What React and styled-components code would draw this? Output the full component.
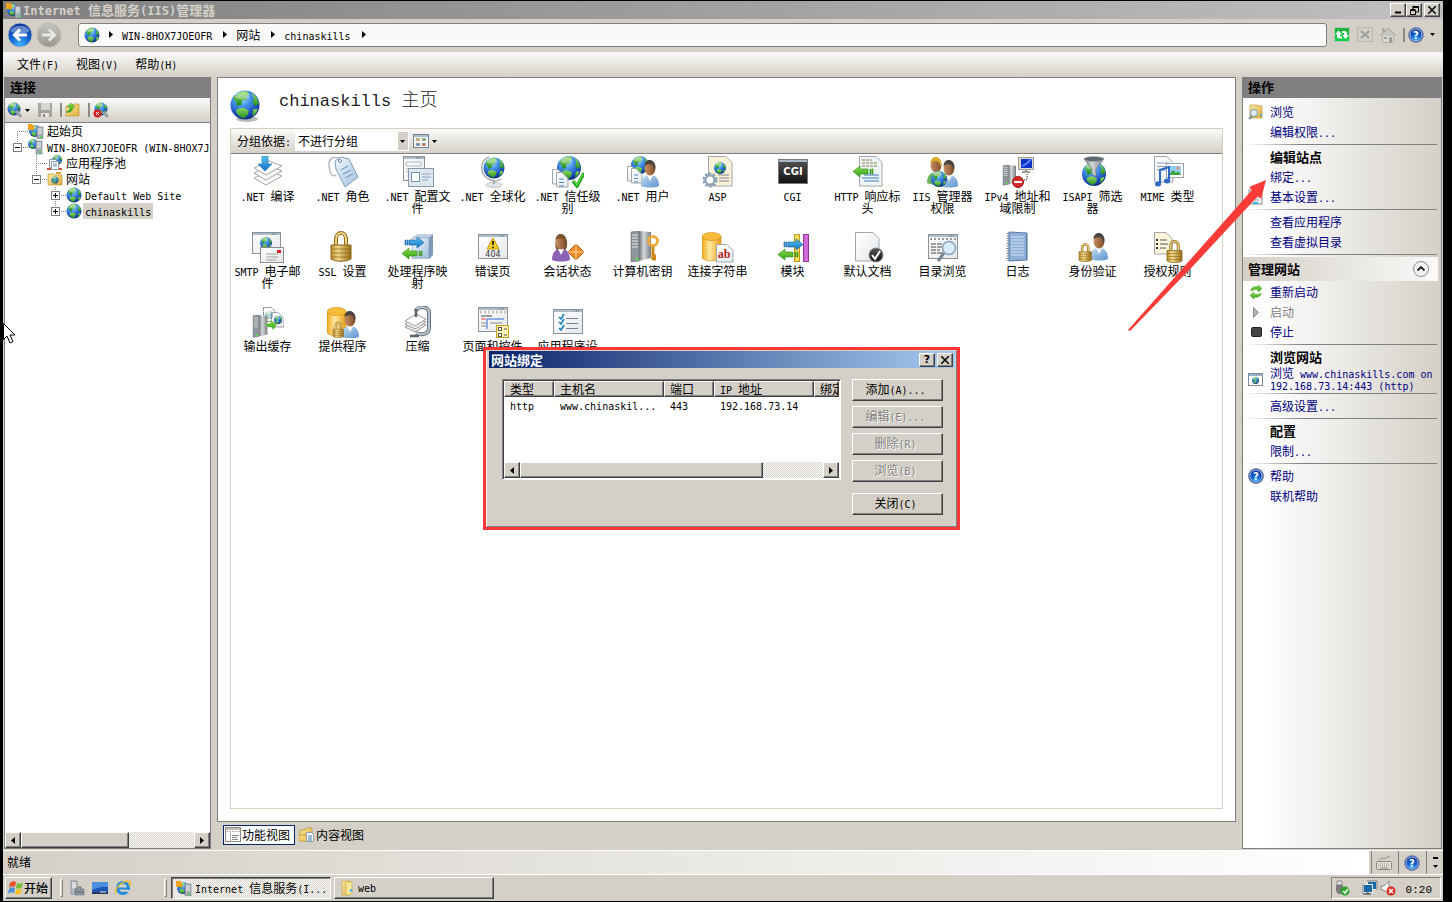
import React from "react";
import styled, { createGlobalStyle, css } from "styled-components";

const Global = createGlobalStyle`
  * { box-sizing: border-box; }
  body {
    margin: 0;
    background: #000;
    color: #000;
    font-family: "Noto Sans CJK SC", sans-serif;
    font-size: 12px;
    line-height: 12px;
  }
  button, select, table { font: inherit; color: inherit; }
  button { padding: 0; border: 0; background: none; white-space: nowrap; }
  ul { list-style: none; margin: 0; padding: 0; }
  svg { display: block; flex: none; }
`;

/* ---------- text ---------- */

const Latin = styled.span`
  font-family: "DejaVu Sans Mono", "Liberation Mono", monospace;
  font-size: var(--latin, 10px);
  line-height: 1px;
`;

const T = ({ children }) =>
  children
    .split(/([\x20-\x7e]+)/)
    .filter(Boolean)
    .map((part, i) => (/^[\x20-\x7e]/.test(part) ? <Latin key={i}>{part}</Latin> : part));

/* ---------- drawing pieces ---------- */

const Defs = () => (
  <svg width="0" height="0" style={{ position: "absolute" }} aria-hidden="true">
    <defs>
      <radialGradient id="sea" cx=".4" cy=".25" r=".8">
        <stop offset="0" stopColor="#a9dcff" />
        <stop offset=".4" stopColor="#3f8fe6" />
        <stop offset=".8" stopColor="#1740b0" />
        <stop offset="1" stopColor="#0c2470" />
      </radialGradient>
      <linearGradient id="land" x2="0" y2="1">
        <stop offset="0" stopColor="#8fdc62" />
        <stop offset="1" stopColor="#1f8a1f" />
      </linearGradient>
      <linearGradient id="gold" x2="1" y2="0">
        <stop offset="0" stopColor="#b98a2c" />
        <stop offset=".35" stopColor="#f2d98a" />
        <stop offset="1" stopColor="#9a6b14" />
      </linearGradient>
      <linearGradient id="drum" x2="1" y2="0">
        <stop offset="0" stopColor="#f0a81c" />
        <stop offset=".4" stopColor="#ffeaa0" />
        <stop offset="1" stopColor="#e39a10" />
      </linearGradient>
      <linearGradient id="steel" x2="1" y2="0">
        <stop offset="0" stopColor="#6d7276" />
        <stop offset=".4" stopColor="#d5d9dc" />
        <stop offset="1" stopColor="#777c80" />
      </linearGradient>
      <linearGradient id="shirt" x2="1" y2="1">
        <stop offset="0" stopColor="#c4def5" />
        <stop offset="1" stopColor="#5c92cc" />
      </linearGradient>
      <linearGradient id="skin" x2="1" y2="0">
        <stop offset="0" stopColor="#c98f63" />
        <stop offset="1" stopColor="#7e4c2a" />
      </linearGradient>
      <linearGradient id="paper" x2="1" y2="1">
        <stop offset="0" stopColor="#fff" />
        <stop offset="1" stopColor="#e4e8ec" />
      </linearGradient>
      <linearGradient id="black" x2="0" y2="1">
        <stop offset="0" stopColor="#555" />
        <stop offset="1" stopColor="#111" />
      </linearGradient>
      <linearGradient id="blueArrow" x2="0" y2="1">
        <stop offset="0" stopColor="#5cc4f5" />
        <stop offset="1" stopColor="#1272c4" />
      </linearGradient>
      <linearGradient id="greenArrow" x2="0" y2="1">
        <stop offset="0" stopColor="#8be04c" />
        <stop offset="1" stopColor="#2f9e16" />
      </linearGradient>
      <linearGradient id="refreshBox" x2="0" y2="1">
        <stop offset="0" stopColor="#1fae3c" />
        <stop offset="1" stopColor="#0bd64a" />
      </linearGradient>
      <linearGradient id="glass" x2="1" y2="1">
        <stop offset="0" stopColor="#f6fafd" />
        <stop offset="1" stopColor="#9dbfdd" />
      </linearGradient>
      <linearGradient id="folder" x2="1" y2="1">
        <stop offset="0" stopColor="#fbe9a4" />
        <stop offset="1" stopColor="#dcae3c" />
      </linearGradient>
      <radialGradient id="orb" cx=".5" cy=".9" r=".9">
        <stop offset="0" stopColor="#38b4ff" />
        <stop offset=".5" stopColor="#1460cc" />
        <stop offset="1" stopColor="#0b2f92" />
      </radialGradient>
      <linearGradient id="grayOrb" x2="0" y2="1">
        <stop offset="0" stopColor="#c6c4be" />
        <stop offset="1" stopColor="#98968f" />
      </linearGradient>
    </defs>
  </svg>
);

const Globe = ({ x = 8, y = 8, r = 7 }) => (
  <g transform={`translate(${x} ${y}) scale(${r / 16})`}>
    <circle r="16" fill="url(#sea)" />
    <path d="M-13-7C-9-14-3-16 2-15L5-12 1-10 3-7-3-5-4 0-9 1-10-4Z" fill="url(#land)" />
    <path d="M7-13C12-11 15-6 15-1L11 1 8-3 10-7Z" fill="url(#land)" />
    <path d="M-8 4L-2 3 4 6 3 11-1 15C-6 14-9 10-10 7Z" fill="url(#land)" />
    <path d="M9 5l5-1c-1 4-3 7-6 9z" fill="url(#land)" />
    <ellipse cx="-3" cy="-10" rx="8" ry="4" fill="#fff" opacity=".35" />
  </g>
);

const Person = ({ x = 0, y = 0, hair = "#4a4440", body = "url(#shirt)" }) => (
  <g transform={`translate(${x} ${y})`}>
    <path d="M0 27c0-7 3-11 9-11s9 4 9 11c-5 2-13 2-18 0z" fill={body} />
    <path d="M6 16l3 6 3-6z" fill="#fff" />
    <ellipse cx="9" cy="9" rx="5.500" ry="7.500" fill="url(#skin)" />
    <path d="M3.500 7C4-1 14-1 14.500 8l-1.500 3c0-4-1-5-3-5.500-2-.5-5 0-6.500 1.500z" fill={hair} />
  </g>
);

const Lock = ({ x = 0, y = 0, s = 1 }) => (
  <g transform={`translate(${x} ${y}) scale(${s})`}>
    <path d="M5 14V8a5 6 0 0 1 10 0v6" fill="none" stroke="#8d6a1c" strokeWidth="4" />
    <path d="M5 14V8a5 6 0 0 1 10 0v6" fill="none" stroke="#ecd184" strokeWidth="2" />
    <path d="M0 14h20v14c-6 3-14 3-20 0z" fill="url(#gold)" stroke="#8a6418" />
    <path d="M1 18h18M1 22h18M1 26h18" stroke="#8a6418" strokeWidth=".7" />
  </g>
);

const Page = ({ x, y, w = 20, h = 26, fill = "url(#paper)", lines = 0, c = "#8fa3b6", from = 7 }) => (
  <g transform={`translate(${x} ${y})`}>
    <path d={`M.5.5H${w - 6}L${w} 6.5V${h}H.5Z`} fill={fill} stroke="#a2a6aa" />
    <path d={`M${w - 6}.5V6.5H${w}`} fill="#fff" stroke="#a2a6aa" />
    {Array.from({ length: lines }, (_, i) => (
      <path key={i} d={`M3 ${from + i * 3.5}H${w - 4}`} stroke={c} />
    ))}
  </g>
);

const Win = ({ x, y, w, h, fill = "url(#paper)" }) => (
  <g transform={`translate(${x} ${y})`}>
    <rect x=".5" y=".5" width={w} height={h} fill={fill} stroke="#8b9299" />
    <path d={`M1 2H${w}`} stroke="#aebdca" strokeWidth="2" />
    <path d={`M${w - 8} 2h6`} stroke="#4d6f93" strokeDasharray="1 1" />
  </g>
);

const Right = ({ x, y }) => (
  <path transform={`translate(${x} ${y})`} d="M0 3h1v5H0zM2 3h1v5H2zM4 3h8V0l7 5.500-7 5.500V8H4z" fill="url(#blueArrow)" stroke="#0e5c9e" strokeWidth=".6" />
);
const Left = ({ x, y }) => (
  <path transform={`translate(${x} ${y})`} d="M20 3h-1v5h1zM18 3h-1v5h1zM15 3H7V0L0 5.500 7 11V8h8z" fill="url(#greenArrow)" stroke="#2b8613" strokeWidth=".6" />
);

const Tower = ({ x, y, s = 1 }) => (
  <g transform={`translate(${x} ${y}) scale(${s})`}>
    <path d="M0 1L8 0V30L0 31Z" fill="#8f969b" stroke="#666c70" strokeWidth=".6" />
    <path d="M8 0L20 1V27L8 30Z" fill="url(#steel)" />
    <path d="M1 4h6M1 7h6M1 10h6M1 13h6M1 16h6" stroke="#e3e7ea" />
    <circle cx="6" cy="28" r="1.500" fill="#57e04a" />
  </g>
);

const Drum = ({ x, y }) => (
  <g transform={`translate(${x} ${y})`}>
    <path d="M0 4V25c0 5 19 5 19 0V4z" fill="url(#drum)" stroke="#d08c0c" strokeWidth=".6" />
    <ellipse cx="9.500" cy="4.500" rx="9.500" ry="4" fill="#f7bd3a" stroke="#d08c0c" strokeWidth=".6" />
  </g>
);

const GlyphText = styled.text`
  font-family: ${(p) => p.$family || '"DejaVu Sans", sans-serif'};
  font-size: ${(p) => p.$size}px;
  font-weight: ${(p) => (p.$plain ? 400 : 700)};
  text-anchor: middle;
  fill: ${(p) => p.$color || "#fff"};
`;

const art = {
  compile: (
    <>
      {[16, 11, 6].map((dy) => (
        <path key={dy} d={`M2 ${dy + 6}L17 ${dy - 1}L30 ${dy + 4}L14 ${dy + 13}Z`} fill="#fbfbfb" stroke="#a5a5a5" />
      ))}
      <path d="M10 0h6v8h4l-7 7-7-7h4z" fill="url(#blueArrow)" stroke="#1670b4" strokeWidth=".6" />
    </>
  ),
  roles: (
    <>
      <path d="M14 3C6-1 1 3 2 10s3 12 7 9" fill="none" stroke="#a9b2ba" strokeWidth="1.300" />
      <path d="M8 5L14 1 22 3 31 21 18 31 9 13Z" fill="url(#glass)" stroke="#7d9bb7" />
      <circle cx="13" cy="5" r="1.500" fill="#fff" stroke="#71889d" />
      <path d="M14 14l7-4M16 18l8-4M18 22l8-4" stroke="#5e8fc0" />
    </>
  ),
  config: (
    <>
      <Win x={1} y={0} w={21} h={24} />
      <path d="M4 6h15v4H4zM4 13h9M4 16h6" fill="none" stroke="#b3b9bf" />
      <rect x="6.500" y="12.500" width="25" height="18" fill="#dfe7ee" stroke="#8b98a5" />
      <rect x="9.500" y="16.500" width="8" height="9" fill="#fff" stroke="#6f93b8" />
      <path d="M20 18h9M20 21h9M20 24h6" stroke="#8aa6c1" />
    </>
  ),
  global: (
    <>
      <path d="M12 1C2 5 2 20 14 24c3 1 7 1 10-1" fill="none" stroke="#a8adb1" strokeWidth="1.500" />
      <Globe x={17} y={12} r={10.5} />
      <ellipse cx="17" cy="29" rx="8" ry="2.500" fill="#e2e4e6" stroke="#a8adb1" strokeWidth=".6" />
      <path d="M17 24v4" stroke="#a8adb1" strokeWidth="2" />
    </>
  ),
  trust: (
    <>
      <Globe x={17} y={12} r={12} />
      <Page x={0} y={13} w={12} h={15} />
      <Page x={4} y={16} w={12} h={15} lines={3} c="#4a86c8" />
      <path d="M21 25l4 5 7-13" fill="none" stroke="#21a321" strokeWidth="3.500" />
      <path d="M22 25l3 4 6-11" fill="none" stroke="#6fe04f" strokeWidth="1.200" />
    </>
  ),
  users: (
    <>
      <Globe x={13} y={9} r={9} />
      <Page x={0} y={10} w={11} h={15} />
      <Page x={4} y={12} w={11} h={15} lines={3} c="#4a86c8" />
      <Person x={14} y={3} />
    </>
  ),
  asp: (
    <>
      <Page x={6} y={0} w={24} h={30} fill="#f8f3d8" />
      <Globe x={18} y={12} r={6} />
      <path d="M16 19h11M17 22h10M17 25h10" stroke="#7f7a9c" />
      <circle cx="8" cy="24" r="6" fill="none" stroke="#8ba2b8" strokeWidth="3" strokeDasharray="2.500 1.270" />
      <circle cx="8" cy="24" r="4.500" fill="#fff" stroke="#8ba2b8" strokeWidth="2" />
    </>
  ),
  cgi: (
    <>
      <rect x="1.500" y="3.500" width="29" height="24" fill="url(#black)" stroke="#777" />
      <path d="M2 5h28" stroke="#a7b7c7" strokeWidth="2" />
      <GlyphText x="16" y="19" $size={10}>CGI</GlyphText>
    </>
  ),
  headers: (
    <>
      <Page x={7} y={0} w={23} h={30} fill="#edf5f6" />
      <path d="M10 4h10M10 7h15M10 10h15" stroke="#8b7a3c" strokeDasharray="3 1" />
      <path d="M12 19h15M10 22h17M12 25h15" stroke="#3c7cc0" />
      <Left x={1} y={10} />
    </>
  ),
  managers: (
    <>
      <Person x={0} y={0} hair="#d9a92e" body="#6fb35c" />
      <Person x={13} y={3} />
      <Globe x={12} y={23} r={8} />
    </>
  ),
  ipv4: (
    <>
      <Tower x={1} y={9} s={0.65} />
      <rect x="16.500" y="1.500" width="15" height="12" fill="#dcdcd6" stroke="#9c9c95" />
      <rect x="19" y="3" width="11" height="9" fill="#1233c8" />
      <path d="M20 10c3-1 6-3 9-7" stroke="#5c8cf0" strokeWidth="2" fill="none" />
      <path d="M24 13v3M20 16h8" stroke="#9c9c95" strokeWidth="2" />
      <path d="M25 18v6h-4" fill="none" stroke="#222" strokeDasharray="1 1" />
      <circle cx="16" cy="26" r="5.500" fill="#d42b2b" stroke="#9e1717" />
      <path d="M12 26h8" stroke="#fff" strokeWidth="2" />
    </>
  ),
  isapi: (
    <>
      <Globe x={17} y={18} r={12} />
      <path d="M7 3h20l-8 10v8l-4-3v-5z" fill="url(#steel)" stroke="#5d656b" strokeWidth=".6" />
      <ellipse cx="17" cy="3" rx="10" ry="2.500" fill="#5f686e" stroke="#aab2b8" strokeWidth=".6" />
    </>
  ),
  mime: (
    <>
      <Page x={2} y={0} w={19} h={26} lines={3} />
      <rect x="14.500" y="7.500" width="17" height="14" fill="#fff" stroke="#9aa7b3" />
      <rect x="17" y="10" width="12" height="9" fill="#8fd0f5" />
      <path d="M17 19l4-5 3 3 2-2 3 4z" fill="#3da336" />
      <circle cx="26" cy="12" r="1.500" fill="#e86" />
      <path d="M8 28V14l9-3v14" fill="none" stroke="#2f67c5" strokeWidth="2" />
      <ellipse cx="6" cy="28" rx="3" ry="2.500" fill="#2f67c5" />
      <ellipse cx="15" cy="25" rx="3" ry="2.500" fill="#2f67c5" />
    </>
  ),
  smtp: (
    <>
      <Win x={0} y={1} w={28} h={21} />
      <Globe x={14} y={12} r={6} />
      <rect x="8.500" y="16.500" width="23" height="15" fill="url(#paper)" stroke="#8e8e8e" />
      <path d="M14 23h12M14 26h12M14 29h10" stroke="#9c9c9c" />
      <rect x="25" y="19" width="4" height="3" fill="#d22" />
    </>
  ),
  ssl: <Lock x={4} y={0} />,
  handlers: (
    <>
      <path d="M10 7l5-4h16v21l-4 4H10z" fill="#c3d2e2" />
      <rect x="10" y="7" width="17" height="20" fill="url(#glass)" stroke="#7e98b3" strokeWidth=".6" />
      <path d="M27 7l4-4v21l-4 4z" fill="#7f9ab8" />
      <Right x={3} y={6} />
      <Left x={0} y={17} />
    </>
  ),
  errors: (
    <>
      <Win x={1} y={3} w={29} h={24} />
      <path d="M16 7l6 11H10z" fill="#ffd52b" stroke="#c79600" />
      <path d="M16 10v4M16 15.500v1.500" stroke="#000" strokeWidth="1.500" />
      <GlyphText x="16" y="26" $size={8} $color="#333" $plain>404</GlyphText>
    </>
  ),
  session: (
    <>
      <path d="M4 8C3 14 3 18 6 20h6c4-2 3-7 3-11z" fill="#7a5230" />
      <Person x={0} y={2} hair="#7a5230" body="#8b62b4" />
      <path d="M24 13l8 8-8 8-8-8z" fill="#f08a24" stroke="#b85c0c" />
      <path d="M24 13v16M16 21h16" stroke="#ffd6a6" />
    </>
  ),
  keys: (
    <>
      <Tower x={4} y={0} />
      <path d="M26 15v14M26 25h3M26 28h3" stroke="#c98717" strokeWidth="3" />
      <circle cx="26" cy="10" r="4.500" fill="none" stroke="#e8ae3c" strokeWidth="3" />
    </>
  ),
  connstr: (
    <>
      <Drum x={0} y={1} />
      <Page x={14} y={13} w={17} h={18} />
      <GlyphText x="22" y="27" $size={12} $color="#b02020" $family='"Liberation Serif", serif'>ab</GlyphText>
    </>
  ),
  modules: (
    <>
      <rect x="17.500" y="3.500" width="5" height="27" fill="#f5dc5c" stroke="#bd9c1c" />
      <rect x="26.500" y="3.500" width="5" height="27" fill="#cf6bd6" stroke="#93329a" />
      <Right x={7} y={8} />
      <Left x={1} y={18} />
    </>
  ),
  defdoc: (
    <>
      <Page x={3} y={1} w={24} h={29} />
      <circle cx="24" cy="24" r="7" fill="url(#black)" stroke="#888" />
      <path d="M20 24l3 4 5-8" fill="none" stroke="#fff" strokeWidth="2" />
    </>
  ),
  dirbrowse: (
    <>
      <Win x={1} y={3} w={29} h={24} />
      <path d="M3 8h26" stroke="#9b9b8e" strokeWidth="2" strokeDasharray="2 2" />
      <path d="M4 13h11M4 16h11M4 19h9M4 22h11" stroke="#444" strokeDasharray="5 1" />
      <circle cx="22" cy="17" r="6.500" fill="#d9edfb" stroke="#8aa3b9" strokeWidth="1.500" />
      <path d="M17 22l-6 8" stroke="#7c8690" strokeWidth="3" />
    </>
  ),
  logs: (
    <>
      <path d="M7 1l18 1v27l-18 1z" fill="#8fb0d8" stroke="#5577a6" />
      <path d="M9 6h13M9 9h13M9 12h13M9 15h13M9 18h13M9 21h13M9 24h13" stroke="#cfe0f3" />
      <path d="M24.500 3v26" stroke="#5577a6" />
      <path d="M6 2v28" stroke="#6d7b89" strokeWidth="3" strokeDasharray="1 1.500" />
    </>
  ),
  auth: (
    <>
      <Person x={13} y={1} />
      <Lock x={2} y={12} s={0.62} />
    </>
  ),
  authz: (
    <>
      <Page x={2} y={1} w={18} h={22} fill="#fbf5dc" />
      <path d="M8 9h7M8 13h8M8 17h6" stroke="#555" />
      <path d="M4 9h2M4 13h2M4 17h2" stroke="#333" strokeWidth="2" />
      <Lock x={15} y={9} s={0.75} />
    </>
  ),
  cache: (
    <>
      <path d="M11.500 1.500h8l4 4v10h-12z" fill="#fff" stroke="#444" strokeDasharray="1 1" />
      <Page x={19} y={6} w={13} h={15} />
      <g opacity=".4"><Globe x={17} y={9} r={4} /></g>
      <Globe x={26} y={14} r={4} />
      <Tower x={1} y={9} s={0.72} />
      <path d="M13 17c3 1 5 1 6-1l-1-2 7 4-4 6-1-3c-4 1-6-1-7-4z" fill="url(#greenArrow)" />
    </>
  ),
  providers: (
    <>
      <Drum x={0} y={1} />
      <Person x={14} y={4} />
      <Lock x={6} y={16} s={0.52} />
    </>
  ),
  compress: (
    <>
      <path d="M3 21L13 26 24 19 14 15Z" fill="#e9e9e9" stroke="#999" />
      <path d="M3 18L13 23 24 16 14 12Z" fill="#f4f4f4" stroke="#999" />
      <path d="M3 15L13 20 24 13 14 8Z" fill="#fff" stroke="#999" />
      <path d="M14 5c1-5 13-5 13 1v16c0 7-8 7-13 5" fill="none" stroke="#66717a" strokeWidth="4" />
      <path d="M14 5c1-5 13-5 13 1v16c0 7-8 7-13 5" fill="none" stroke="#b9c6d2" strokeWidth="2" />
      <path d="M14 3v8M8 30h9" stroke="#59636b" strokeWidth="2.500" />
    </>
  ),
  pages: (
    <>
      <Win x={1} y={1} w={29} h={24} />
      <path d="M3 6h26" stroke="#c9c4b8" strokeWidth="3" strokeDasharray="2 2" />
      <path d="M4 10h11" stroke="#444" />
      <path d="M4 13h5" stroke="#e03a2a" />
      <path d="M10 13h17M10 13v10" stroke="#2d62d6" />
      <path d="M4 17h5M4 20h5M13 17h12" stroke="#888" />
      <rect x="19.500" y="19.500" width="12" height="12" fill="#fff3b4" stroke="#c2a21c" />
      <rect x="21.500" y="21.500" width="3" height="3" fill="#fff" stroke="#555" />
      <rect x="21.500" y="27.500" width="3" height="3" fill="#fff" stroke="#555" />
      <path d="M27 23h3M27 29h3" stroke="#555" />
    </>
  ),
  appset: (
    <>
      <Win x={1} y={3} w={29} h={24} />
      <path d="M14 12.500h12M14 17.500h12M14 22.500h12" stroke="#7d7d93" />
      <path d="M7 11l2 2 3-5M7 16l2 2 3-5M7 22l2 2 3-5" fill="none" stroke="#1a82b8" strokeWidth="1.600" />
    </>
  ),
};

const small = {
  globe: <Globe x={8} y={8} r={7.5} />,
  start: (
    <>
      <Globe x={7} y={8} r={6} />
      <path d="M0 1h4l2 2v4H0z" fill="#f4a21c" />
      <rect x="9" y="4" width="6" height="12" fill="#a7b0b7" stroke="#747c83" strokeWidth=".6" />
      <path d="M10 6h4M10 8h4M10 10h4" stroke="#eef1f3" />
      <path d="M12 14h2" stroke="#3fdd38" strokeWidth="1.500" />
    </>
  ),
  server: (
    <>
      <Globe x={5} y={5} r={5} />
      <rect x="8" y="2" width="6" height="13" fill="#a7b0b7" stroke="#747c83" strokeWidth=".6" />
      <path d="M9 4h4M9 6h4M9 8h4" stroke="#eef1f3" />
      <path d="M11 13h2" stroke="#3fdd38" strokeWidth="1.500" />
    </>
  ),
  pool: (
    <>
      <Globe x={10} y={5} r={5} />
      <path d="M2.500 4.500h7v8h-7z" fill="#fff" stroke="#8c9aa8" />
      <path d="M4.500 6.500h7v8h-7z" fill="#fff" stroke="#8c9aa8" />
      <path d="M6 9h4M6 11h4" stroke="#5a8cc4" />
      <path d="M0 14h4M12 14h3" stroke="#c8503c" strokeWidth="2" />
    </>
  ),
  sites: (
    <>
      <path d="M1 3h6l1 1h7v10H1z" fill="url(#folder)" stroke="#b38a24" strokeWidth=".6" />
      <path d="M9 2h5" stroke="#e39a2c" strokeWidth="2" />
      <Globe x={8} y={9} r={3.5} />
    </>
  ),
  connect: (
    <>
      <Globe x={7} y={7} r={6.5} />
      <path d="M9 9l5 6" stroke="#9aa2a9" strokeWidth="3" />
    </>
  ),
  disconnect: (
    <>
      <Globe x={8} y={7} r={6.5} />
      <path d="M10 10l5 5" stroke="#9aa2a9" strokeWidth="3" />
      <circle cx="4.500" cy="11.500" r="4" fill="#d42222" />
      <path d="M3 10l3 3M6 10l-3 3" stroke="#fff" />
    </>
  ),
  save: (
    <>
      <path d="M1 1h14v14H1z" fill="#a6a49e" />
      <path d="M4 1h9v7H4z" fill="#d8d6d0" />
      <path d="M4 11h8v4H4z" fill="#e6e4e0" />
      <path d="M6 12h2v3H6z" fill="#8a8882" />
    </>
  ),
  up: (
    <>
      <path d="M1 4h6l1-2h6v12H1z" fill="url(#folder)" stroke="#b38a24" strokeWidth=".6" />
      <path d="M1 10c3-1 4-2 4-5H2l4-4 4 4H8c0 4-3 6-7 5z" fill="url(#greenArrow)" stroke="#2b8613" strokeWidth=".4" />
    </>
  ),
  view: (
    <>
      <rect x=".5" y="1.500" width="15" height="13" fill="#f4f4f0" stroke="#77838f" />
      <path d="M1 3h14" stroke="#a9bccf" strokeWidth="2" />
      <rect x="3.500" y="5.500" width="3" height="2" fill="#f5c542" stroke="#888" strokeWidth=".6" />
      <rect x="9.500" y="5.500" width="3" height="2" fill="#6bbf59" stroke="#888" strokeWidth=".6" />
      <rect x="3.500" y="10.500" width="3" height="2" fill="#4f7fd6" stroke="#888" strokeWidth=".6" />
      <rect x="9.500" y="10.500" width="3" height="2" fill="#e0652c" stroke="#888" strokeWidth=".6" />
    </>
  ),
  explore: (
    <>
      <path d="M2 1h6l6 1v12H2z" fill="url(#folder)" stroke="#b38a24" strokeWidth=".6" />
      <circle cx="6" cy="9" r="3.500" fill="#dff0fc" stroke="#7c97b0" />
      <path d="M4 12l-3 3" stroke="#7c8690" strokeWidth="2" />
      <path d="M12 11h2" stroke="#36a5e8" strokeWidth="2" />
    </>
  ),
  basic: (
    <>
      <rect x="1" y="1" width="13" height="14" fill="#f3f3f3" stroke="#8a8a8a" />
      <path d="M3 5h8M3 8h8M3 11h8" stroke="#999" />
      <path d="M5 14h5" stroke="#2eb6e8" strokeWidth="2" />
    </>
  ),
  restart: (
    <>
      <path d="M3 7c0-4 4-5 7-4V1l4 3.500L10 8V6C7 5 5 6 3 7z" fill="url(#greenArrow)" stroke="#2b8613" strokeWidth=".4" />
      <path d="M13 9c0 4-4 5-7 4v2l-4-3.500L6 8v2c3 1 5 0 7-1z" fill="url(#greenArrow)" stroke="#2b8613" strokeWidth=".4" />
    </>
  ),
  play: <path d="M5.500 3.500v10l5-5z" fill="#b4b4b4" stroke="#8a8a8a" />,
  stopSq: <rect x="3.500" y="3.500" width="10" height="9" rx="1" fill="#444" stroke="#222" />,
  browse: (
    <>
      <rect x=".5" y="2.500" width="14" height="12" fill="#fff" stroke="#7e8b97" />
      <path d="M1 4h13" stroke="#9ab0c6" strokeWidth="2" />
      <Globe x={7.5} y={9.5} r={3.5} />
    </>
  ),
  help: (
    <>
      <circle cx="8" cy="8" r="7.500" fill="#2350ae" stroke="#8794a8" />
      <circle cx="8" cy="8" r="6" fill="url(#orb)" stroke="#c8d4ec" strokeWidth=".8" />
      <GlyphText x="8" y="12" $size={10}>?</GlyphText>
    </>
  ),
  refresh: (
    <>
      <rect x=".5" y=".5" width="15" height="14" fill="url(#refreshBox)" stroke="#b4c8b4" />
      <path d="M1 7.500l3.500-4 3.500 4H6v2h2v2H6c-2 0-3-1-3-2v-2z" fill="#fff" />
      <path d="M15 8l-3.500 4L8 8h2V6H8V4h2c2 0 3 1 3 2v2z" fill="#fff" />
    </>
  ),
  stopX: (
    <>
      <rect x=".5" y=".5" width="15" height="14" fill="#d0cec9" stroke="#bab8b2" />
      <path d="M4 4l8 7M12 4l-8 7" stroke="#9f9d98" strokeWidth="2" />
    </>
  ),
  home: (
    <>
      <path d="M2.500 8h11v7.500h-11z" fill="#dddbd6" stroke="#b0aea8" />
      <path d="M0 8.500l8-7 8 7" fill="#c8c6c0" stroke="#a19f99" />
      <path d="M3.500 1v4" stroke="#a19f99" strokeWidth="2" />
      <path d="M9 10h3v6H9zM4 10h3v2H4z" fill="#a19f99" />
    </>
  ),
  features: (
    <>
      <rect x=".5" y=".5" width="15" height="14" fill="#fff" stroke="#888" />
      <path d="M1 2h14" stroke="#c4c1b8" strokeWidth="2" />
      <path d="M1 4.500h14" stroke="#b8b4a8" strokeDasharray="2 1" />
      <path d="M5.500 6v8" stroke="#aaa" />
      <path d="M7 8.500h7M7 10.500h5M7 12.500h6" stroke="#888" />
    </>
  ),
  content: (
    <>
      <path d="M1 3h5l1-2h6v11H1z" fill="url(#folder)" stroke="#b38a24" strokeWidth=".6" />
      <path d="M0 8h9v6H0z" fill="#f3cf70" stroke="#b38a24" strokeWidth=".6" />
      <path d="M7.500 5.500h5l2 2v7h-7z" fill="#fff" stroke="#8c9aa8" />
      <path d="M9 9h4M9 11h4M9 13h4" stroke="#3c7cc0" />
    </>
  ),
  flag: (
    <>
      <path d="M2 3c2-2 4-2 6-1L7 7C5 6 3 6 1 8z" fill="#e8502c" />
      <path d="M9 3c2 1 4 1 6-1l-1 5c-2 2-4 2-6 1z" fill="#7cba3c" />
      <path d="M1 9c2-2 4-2 6-1l-1 5c-2-1-4-1-6 1z" fill="#4c90dc" />
      <path d="M8 9c2 1 4 1 6-1l-1 5c-2 2-4 2-6 1z" fill="#f6bf2a" />
    </>
  ),
  toolbox: (
    <>
      <rect x="2" y="1" width="6" height="13" fill="#b4bbc1" stroke="#6f777e" strokeWidth=".6" />
      <path d="M3 3h4M3 5h4M3 7h4" stroke="#fff" />
      <path d="M6 9h9v6H6z" fill="#8e99a3" stroke="#5f6972" strokeWidth=".6" />
      <path d="M9 9V7h3v2M6 12h9" fill="none" stroke="#5f6972" />
    </>
  ),
  desktop: (
    <>
      <path d="M0 2h16v11H0z" fill="#1e56b4" />
      <path d="M0 2h16v5C10 6 5 8 0 10z" fill="#4f8ee0" />
      <path d="M0 12h16v2H0z" fill="#2a3a58" />
      <path d="M8 12h6" stroke="#dfe8f5" />
    </>
  ),
  ie: (
    <>
      <circle cx="8" cy="8" r="5.500" fill="none" stroke="#1e8be0" strokeWidth="3" />
      <path d="M4 8.500h9" stroke="#1e8be0" strokeWidth="2" />
      <path d="M11 10h5v2h-5z" fill="#d4d0c8" />
      <path d="M1 14C-2 9 9-1 15 2c1 1 0 3-1 4" fill="none" stroke="#f3bb26" strokeWidth="1.500" />
    </>
  ),
  folder: (
    <>
      <path d="M3 1h8v14H3z" fill="url(#folder)" stroke="#c9a53c" strokeWidth=".6" />
      <path d="M7 2h6v12l-3 1H7z" fill="#f9e59c" stroke="#c9a53c" strokeWidth=".6" />
      <path d="M11 9h2v3h-2z" fill="#58b4ea" />
    </>
  ),
  keyboard: (
    <>
      <path d="M4 5c2-4 4 0 6-2s3-1 4-1" fill="none" stroke="#8a8882" />
      <rect x=".5" y="6.500" width="15" height="8" rx="1" fill="#e4e2dd" stroke="#8a8882" />
      <path d="M2 9h12M2 11h12" stroke="#8a8882" strokeDasharray="1 1" />
      <path d="M4 13h8" stroke="#8a8882" />
    </>
  ),
  usb: (
    <>
      <path d="M2 5h7v6l-2 3H4l-2-3z" fill="#7b7b7b" />
      <path d="M3 1h5v4H3z" fill="#d8d8d8" stroke="#666" strokeWidth=".6" />
      <circle cx="11" cy="11" r="4.500" fill="#2ba32b" />
      <path d="M9 11l2 2 3-4" fill="none" stroke="#fff" strokeWidth="1.500" />
    </>
  ),
  network: (
    <>
      <rect x="5.500" y="1.500" width="9" height="8" fill="#1668a8" stroke="#e8f0f8" />
      <rect x="1.500" y="4.500" width="9" height="8" fill="#1668a8" stroke="#e8f0f8" />
      <path d="M1 14h8M4 13h3" stroke="#333" />
      <path d="M5 1h10v9M1 4v9" fill="none" stroke="#333" strokeWidth=".6" />
    </>
  ),
  mute: (
    <>
      <path d="M1 6h3l5-5v14l-5-5H1z" fill="#f6f6f6" stroke="#888" />
      <circle cx="11" cy="11" r="4.500" fill="#d92c22" />
      <path d="M9 9l4 4M13 9l-4 4" stroke="#fff" strokeWidth="1.500" />
    </>
  ),
};

const Art = ({ name, size = 32 }) => (
  <svg width={size} height={size} viewBox="0 0 32 32" aria-hidden="true">{art[name]}</svg>
);
const Icon = ({ name, size = 16 }) => (
  <svg width={size} height={size} viewBox="0 0 16 16" aria-hidden="true">{small[name]}</svg>
);
const arrows = {
  right: { w: 4, h: 7, d: "M0 0v7l4-3.500z" },
  left: { w: 4, h: 7, d: "M4 0v7L0 3.500z" },
  down: { w: 5, h: 3, d: "M0 0h5L2.500 3z" },
};
const Tri = ({ dir }) => {
  const a = arrows[dir];
  return (
    <svg width={a.w} height={a.h} viewBox={`0 0 ${a.w} ${a.h}`} aria-hidden="true">
      <path d={a.d} />
    </svg>
  );
};

/* ---------- shared chrome ---------- */

const raised = css`
  background: #d4d0c8;
  border: 1px solid;
  border-color: #fff #404040 #404040 #fff;
  box-shadow: inset -1px -1px #808080;
`;
const hatch = css`
  background: repeating-conic-gradient(#fff 0 25%, #d4d0c8 0 50%) 0 0 / 2px 2px;
`;
const sheen = css`
  background: linear-gradient(#fbfaf9, #d4d0c8);
`;

const Desktop = styled.div`
  position: relative;
  min-height: 100vh;
  padding: 1px 9px 1px 3px;
  background: #000;
  display: flex;
  overflow: hidden;
`;
const Frame = styled.div`
  flex: 1;
  min-width: 0;
  display: flex;
  flex-direction: column;
  background: #d4d0c8;
`;

const TitleBar = styled.header`
  --latin: 12px;
  height: 18px;
  display: flex;
  align-items: center;
  padding: 0 3px;
  background: linear-gradient(90deg, #808080, #c0c0c0);
  color: #d4d0c8;
  font-size: 13px;
  font-weight: 700;
`;
const TitleText = styled.span`
  flex: 1;
  padding-left: 1px;
  white-space: nowrap;
`;
const CaptionButton = styled.button`
  ${raised}
  width: 16px;
  height: 14px;
  display: grid;
  place-items: center;
  margin-left: ${(p) => (p.$gap ? 2 : 0)}px;
`;
const HelpMark = styled.span`
  color: #000;
  font-family: "DejaVu Sans", sans-serif;
  font-size: 11px;
  font-weight: 700;
`;

const NavBar = styled.div`
  height: 33px;
  display: flex;
  align-items: center;
  padding: 0 8px 2px 4px;
`;
const NavPair = styled.div`
  display: flex;
  gap: 3px;
  width: 71px;
`;
const RoundButton = styled.button`
  width: 26px;
  height: 26px;
`;
const Crumbs = styled.nav`
  flex: 1;
  height: 24px;
  display: flex;
  align-items: center;
  gap: 9px;
  padding: 0 5px;
  background: #fbfaf9;
  border: 1px solid #808080;
  border-radius: 3px;
`;
const Crumb = styled.button`
  padding-right: 2px;
`;
const NavTools = styled.div`
  display: flex;
  align-items: center;
  gap: 7px;
  padding-left: 7px;
`;
const ToolButton = styled.button`
  display: flex;
  align-items: center;
  gap: ${(p) => p.$gap || 0}px;
`;
const ToolGroup = styled.div`
  display: flex;
  align-items: center;
  gap: 3px;
`;
const VRule = styled.span`
  width: 2px;
  height: 14px;
  background: #8c8a84;
`;

const MenuBar = styled.nav`
  ${sheen}
  height: 25px;
  display: flex;
  align-items: center;
  gap: 17px;
  padding: 0 14px 2px;
`;

const Main = styled.main`
  flex: 1;
  display: grid;
  grid-template-columns: 207px minmax(0, 1fr) 200px;
  gap: 6px;
  padding: 0 1px 1px;
`;
const SidePanel = styled.section`
  min-width: 0;
  display: flex;
  flex-direction: column;
  border: 1px solid #808080;
  border-top: 0;
  background: ${(p) => p.$bg || "#fff"};
`;
const PanelTitle = styled.h2`
  margin: 0;
  height: 21px;
  padding: 0 5px;
  background: #808080;
  font-size: 13px;
  line-height: 20px;
`;
const PanelTools = styled.div`
  ${sheen}
  height: 25px;
  display: flex;
  align-items: center;
  gap: 7px;
  padding-left: 2px;
  border-bottom: 1px solid #808080;
`;

/* ---------- tree ---------- */

const Tree = styled.ul`
  flex: 1;
  overflow: hidden;
`;
const TreeRow = styled.li`
  height: 16px;
  display: flex;
  align-items: center;
  padding-left: ${(p) => p.$depth * 19}px;
  white-space: nowrap;
`;
const TreeLabel = styled.button`
  height: 16px;
  padding: 0 2px 1px;
  margin-left: 1px;
  background: ${(p) => (p.$selected ? "#d4d0c8" : "transparent")};
`;
const Branch = ({ box, up, down }) => (
  <svg width="23" height="16" viewBox="0 0 23 16" aria-hidden="true">
    <g stroke="#808080" fill="none">
      <path d="M12 8.500h11" strokeDasharray="1 1" />
      {up && <path d="M12.500 0v8" strokeDasharray="1 1" />}
      {down && <path d="M12.500 8v8" strokeDasharray="1 1" />}
      {box && <rect x="8.500" y="4.500" width="8" height="8" fill="#fff" />}
    </g>
    {box && <path d={box === "plus" ? "M10 8.500h5M12.500 6v5" : "M10 8.500h5"} stroke="#000" />}
  </svg>
);
const treeRows = [
  { depth: 0, icon: "start", text: "起始页", down: true },
  { depth: 0, icon: "server", text: "WIN-8HOX7JOEOFR (WIN-8HOX7J", box: "minus", up: true },
  { depth: 1, icon: "pool", text: "应用程序池", up: true, down: true },
  { depth: 1, icon: "sites", text: "网站", box: "minus", up: true },
  { depth: 2, icon: "globe", text: "Default Web Site", box: "plus", up: true, down: true },
  { depth: 2, icon: "globe", text: "chinaskills", box: "plus", up: true, selected: true },
];

/* ---------- scroll bar ---------- */

const ScrollTrack = styled.div`
  ${hatch}
  height: 16px;
  display: flex;
`;
const ScrollButton = styled.button`
  ${raised}
  width: 16px;
  display: grid;
  place-items: center;
`;
const ScrollThumb = styled.div`
  ${raised}
  width: ${(p) => p.$w}px;
  margin-right: auto;
`;
const ScrollBar = ({ thumb }) => (
  <ScrollTrack>
    <ScrollButton aria-label="向左滚动"><Tri dir="left" /></ScrollButton>
    <ScrollThumb $w={thumb} />
    <ScrollButton aria-label="向右滚动"><Tri dir="right" /></ScrollButton>
  </ScrollTrack>
);

/* ---------- centre ---------- */

const Center = styled.div`
  min-width: 0;
  display: flex;
  flex-direction: column;
`;
const Workspace = styled.section`
  flex: 1;
  display: flex;
  flex-direction: column;
  padding: 0 12px 12px;
  background: #fff;
  border: 1px solid #808080;
`;
const PageHead = styled.div`
  height: 50px;
  display: flex;
  gap: 17px;
  padding-top: 10px;
`;
const PageTitle = styled.h1`
  --latin: 17px;
  margin: 0;
  font-size: 18px;
  font-weight: 300;
  line-height: 20px;
  color: #222;
  ${Latin} { font-family: "Liberation Mono", monospace; }
`;
const FeatureBox = styled.div`
  flex: 1;
  border: 1px solid #d4d0c0;
`;
const GroupBar = styled.div`
  ${sheen}
  height: 25px;
  display: flex;
  align-items: center;
  gap: 4px;
  padding-left: 6px;
  border-bottom: 1px solid #808080;
`;
const SelectWrap = styled.div`
  height: 20px;
  width: 114px;
  display: flex;
  position: relative;
  border: 1px solid #fff;
  background: #fff;
`;
const GroupSelect = styled.select`
  appearance: none;
  flex: 1;
  border: 0;
  padding: 0 2px;
  background: linear-gradient(#d4d0c8, #d4d0c8) right / 10px 100% no-repeat;
  border-radius: 0;
`;
const SelectArrow = styled.span`
  position: absolute;
  right: 3px;
  top: 8px;
  pointer-events: none;
`;
const FeatureGrid = styled.ul`
  display: grid;
  grid-template-columns: repeat(auto-fill, 75px);
  grid-auto-rows: 75px;
`;
const FeatureButton = styled.button`
  width: 73px;
  padding: 2px 1px 0;
  display: flex;
  flex-direction: column;
  align-items: center;
  gap: 2px;
  white-space: normal;
  line-height: 12px;
`;
const features = [
  ["compile", ".NET 编译"], ["roles", ".NET 角色"], ["config", ".NET 配置文件"], ["global", ".NET 全球化"],
  ["trust", ".NET 信任级别"], ["users", ".NET 用户"], ["asp", "ASP"], ["cgi", "CGI"], ["headers", "HTTP 响应标头"],
  ["managers", "IIS 管理器权限"], ["ipv4", "IPv4 地址和域限制"], ["isapi", "ISAPI 筛选器"], ["mime", "MIME 类型"],
  ["smtp", "SMTP 电子邮件"], ["ssl", "SSL 设置"], ["handlers", "处理程序映射"], ["errors", "错误页"],
  ["session", "会话状态"], ["keys", "计算机密钥"], ["connstr", "连接字符串"], ["modules", "模块"],
  ["defdoc", "默认文档"], ["dirbrowse", "目录浏览"], ["logs", "日志"], ["auth", "身份验证"], ["authz", "授权规则"],
  ["cache", "输出缓存"], ["providers", "提供程序"], ["compress", "压缩"], ["pages", "页面和控件"], ["appset", "应用程序设"],
];

const ViewTabs = styled.div`
  height: 27px;
  display: flex;
  align-items: flex-start;
  gap: 2px;
  padding: 3px 6px 0;
`;
const ViewTab = styled.button`
  height: 20px;
  display: flex;
  align-items: center;
  gap: 1px;
  padding: 0 4px 0 1px;
  border: 1px solid ${(p) => (p.$active ? "#0a246a" : "transparent")};
  background: ${(p) => (p.$active ? "#fff" : "transparent")};
`;

/* ---------- actions ---------- */

const ActionList = styled.div`
  padding-top: 4px;
`;
const ActionRow = styled.div`
  min-height: ${(p) => (p.$double ? 24 : 20)}px;
  display: grid;
  grid-template-columns: 16px 1fr;
  align-items: center;
  column-gap: 6px;
  padding-left: 5px;
  white-space: nowrap;
`;
const ActionLink = styled.a`
  grid-column: 2;
  color: ${(p) => (p.$off ? "#808080" : "#000080")};
  text-decoration: none;
`;
const ActionHead = styled.h3`
  grid-column: 2;
  margin: 0;
  font-size: 13px;
`;
const ActionRule = styled.hr`
  height: 1px;
  border: 0;
  margin: 2px 4px 2px 3px;
  background: linear-gradient(90deg, transparent, #808080 30%);
`;
const ActionSection = styled.div`
  height: 24px;
  margin: 0 3px 1px 0;
  padding: 0 9px 0 5px;
  display: flex;
  align-items: center;
  justify-content: space-between;
  background: linear-gradient(90deg, #d4d0c8, #faf9f8);
`;
const SectionTitle = styled.h3`
  margin: 0;
  font-size: 13px;
`;
const Action = ({ icon, children, off }) => (
  <ActionRow>
    {icon && <Icon name={icon} />}
    <ActionLink href="#" $off={off}><T>{children}</T></ActionLink>
  </ActionRow>
);
const Head = ({ children }) => <ActionRow><ActionHead>{children}</ActionHead></ActionRow>;

/* ---------- status and task bar ---------- */

const StatusBar = styled.footer`
  height: 24px;
  display: flex;
  border-top: 1px solid #fff;
`;
const StatusText = styled.div`
  flex: 1;
  padding: 5px 4px 0;
  background: linear-gradient(90deg, #d4d0c8, #fff);
  border-right: 1px solid #fff;
`;
const StatusCell = styled.div`
  width: ${(p) => p.$w}px;
  display: flex;
  flex-direction: column;
  gap: 6px;
  align-items: center;
  justify-content: center;
  border-left: 1px solid #808080;
  margin-left: 2px;
`;
const TaskBar = styled.footer`
  height: 27px;
  display: flex;
  align-items: center;
  padding: 0 2px;
  border-top: 1px solid #fff;
`;
const StartButton = styled.button`
  ${raised}
  width: 47px;
  height: 22px;
  display: flex;
  align-items: center;
  padding-left: 2px;
  font-weight: 500;
`;
const Grip = styled.span`
  width: 3px;
  height: 18px;
  margin: 0 ${(p) => p.$after}px 0 8px;
  border: 1px solid;
  border-color: #fff #808080 #808080 #fff;
`;
const Quick = styled.div`
  display: flex;
  gap: 7px;
  width: 87px;
`;
const TaskButton = styled.button`
  ${raised}
  ${(p) => p.$active && css`
    ${hatch}
    border-color: #404040 #fff #fff #404040;
    box-shadow: inset 1px 1px #808080;
  `}
  width: 160px;
  height: 22px;
  margin-right: 3px;
  padding-left: 4px;
  display: flex;
  align-items: center;
  gap: 3px;
`;
const Tray = styled.div`
  --latin: 11px;
  height: 22px;
  margin-left: auto;
  padding: 0 8px 0 2px;
  display: flex;
  align-items: center;
  gap: 2px;
  border: 1px solid;
  border-color: #808080 #fff #fff #808080;
`;
const TrayGap = styled.span`
  width: 8px;
`;
const Clock = styled.time`
  padding-left: 8px;
  ${Latin} { font-family: "Liberation Mono", monospace; }
`;

/* ---------- binding dialog ---------- */

const Outline = styled.div`
  position: absolute;
  left: 483px;
  top: 347px;
  width: 477px;
  border: 3px solid #fb3636;
  background: #d4d0c8;
`;
const DialogBody = styled.div`
  border: 1px solid;
  border-color: #d4d0c8 #808080 #808080 #fff;
  padding: 0 1px 11px 2px;
`;
const DialogTitle = styled.div`
  height: 17px;
  display: flex;
  align-items: center;
  padding: 0 2px 0 1px;
  background: linear-gradient(90deg, #0a246a, #a6caf0);
  color: #fff;
  font-size: 13px;
  font-weight: 700;
`;
const DialogContent = styled.div`
  display: flex;
  gap: 11px;
  padding: 11px 12px 0 13px;
`;
const ListView = styled.div`
  flex: 1;
  height: 101px;
  display: flex;
  flex-direction: column;
  justify-content: space-between;
  background: #fff;
  border: 1px solid;
  border-color: #808080 #fff #fff #808080;
  box-shadow: inset 1px 1px #404040;
  padding: 1px;
  overflow: hidden;
`;
const BindTable = styled.table`
  width: 100%;
  table-layout: fixed;
  border-collapse: separate;
  border-spacing: 0;
  white-space: nowrap;
`;
const Th = styled.th`
  ${raised}
  width: ${(p) => p.$w}px;
  height: 16px;
  padding: 0 0 0 5px;
  text-align: left;
  font-weight: 400;
  overflow: hidden;
`;
const Td = styled.td`
  height: 18px;
  padding: 0 0 2px 6px;
`;
const DialogButtons = styled.div`
  width: 91px;
  display: flex;
  flex-direction: column;
  gap: 5px;
`;
const DialogButton = styled.button`
  ${raised}
  height: 22px;
  margin-top: ${(p) => (p.$apart ? 6 : 0)}px;
  padding: 0 4px 2px 0;
  &:disabled { color: #808080; text-shadow: 1px 1px #fff; }
`;

const Overlay = styled.svg`
  position: absolute;
  left: ${(p) => p.$x}px;
  right: ${(p) => p.$right}px;
  top: ${(p) => p.$y}px;
  pointer-events: none;
`;

export default function App() {
  return (
    <Desktop>
      <Global />
      <Defs />
      <Frame>
        <TitleBar>
          <Icon name="start" />
          <TitleText><T>Internet 信息服务(IIS)管理器</T></TitleText>
          <CaptionButton aria-label="最小化">
            <svg width="8" height="8"><path d="M1 6.500h6" stroke="#000" strokeWidth="2" /></svg>
          </CaptionButton>
          <CaptionButton aria-label="还原">
            <svg width="9" height="9"><path d="M3 1.500h5.500V6M3 0v3M.5 4.500h5v4h-5zM.5 3.500h5M3 .5h6M8.500 6H6" fill="none" stroke="#000" /></svg>
          </CaptionButton>
          <CaptionButton $gap aria-label="关闭">
            <svg width="8" height="8"><path d="M0 0l8 8M8 0L0 8" stroke="#000" strokeWidth="1.500" /></svg>
          </CaptionButton>
        </TitleBar>

        <NavBar>
          <NavPair>
            <RoundButton aria-label="后退">
              <svg width="26" height="26">
                <circle cx="13" cy="13" r="12" fill="url(#orb)" stroke="#b0b8c4" />
                <path d="M3 9a11 9 0 0 1 20 0c-5 3-14 4-20 0z" fill="#fff" opacity=".35" />
                <path d="M20 13H8M13 7.500L7.500 13l5.500 5.500" fill="none" stroke="#fff" strokeWidth="3" />
              </svg>
            </RoundButton>
            <RoundButton aria-label="前进">
              <svg width="26" height="26">
                <circle cx="13" cy="13" r="12" fill="url(#grayOrb)" stroke="#bcbab4" />
                <path d="M6 13h12M13 7.500l5.500 5.500-5.500 5.500" fill="none" stroke="#e8e6e2" strokeWidth="3" />
              </svg>
            </RoundButton>
          </NavPair>
          <Crumbs aria-label="地址">
            <Icon name="globe" />
            <Tri dir="right" />
            <Crumb><T>WIN-8HOX7JOEOFR</T></Crumb>
            <Tri dir="right" />
            <Crumb>网站</Crumb>
            <Tri dir="right" />
            <Crumb><T>chinaskills</T></Crumb>
            <Tri dir="right" />
          </Crumbs>
          <NavTools>
            <ToolButton aria-label="刷新"><Icon name="refresh" /></ToolButton>
            <ToolButton aria-label="停止加载"><Icon name="stopX" /></ToolButton>
            <ToolButton aria-label="主页"><Icon name="home" /></ToolButton>
            <ToolGroup>
              <VRule />
              <ToolButton aria-label="帮助" $gap={6}><Icon name="help" /><Tri dir="down" /></ToolButton>
            </ToolGroup>
          </NavTools>
        </NavBar>

        <MenuBar>
          <button><T>文件(F)</T></button>
          <button><T>视图(V)</T></button>
          <button><T>帮助(H)</T></button>
        </MenuBar>

        <Main>
          <SidePanel>
            <PanelTitle>连接</PanelTitle>
            <PanelTools>
              <ToolButton aria-label="连接" $gap={2}><Icon name="connect" /><Tri dir="down" /></ToolButton>
              <ToolButton aria-label="保存"><Icon name="save" /></ToolButton>
              <ToolGroup>
                <VRule />
                <ToolButton aria-label="向上"><Icon name="up" /></ToolButton>
              </ToolGroup>
              <ToolGroup>
                <VRule />
                <ToolButton aria-label="断开"><Icon name="disconnect" /></ToolButton>
              </ToolGroup>
            </PanelTools>
            <Tree>
              {treeRows.map((r) => (
                <TreeRow key={r.text} $depth={r.depth}>
                  <Branch box={r.box} up={r.up} down={r.down} />
                  <Icon name={r.icon} />
                  <TreeLabel $selected={r.selected}><T>{r.text}</T></TreeLabel>
                </TreeRow>
              ))}
            </Tree>
            <ScrollBar thumb={108} />
          </SidePanel>

          <Center>
            <Workspace>
              <PageHead>
                <svg width="32" height="34" viewBox="0 0 32 34" aria-hidden="true">
                  <ellipse cx="17" cy="31" rx="11" ry="3" fill="#bbb" />
                  <Globe x={15} y={17} r={14.5} />
                </svg>
                <PageTitle><T>chinaskills 主页</T></PageTitle>
              </PageHead>
              <FeatureBox>
                <GroupBar>
                  <label htmlFor="group"><T>分组依据:</T></label>
                  <SelectWrap>
                    <GroupSelect id="group"><option>不进行分组</option></GroupSelect>
                    <SelectArrow><Tri dir="down" /></SelectArrow>
                  </SelectWrap>
                  <ToolButton aria-label="视图" $gap={3}><Icon name="view" /><Tri dir="down" /></ToolButton>
                </GroupBar>
                <FeatureGrid>
                  {features.map(([icon, label]) => (
                    <li key={label}>
                      <FeatureButton><Art name={icon} /><span><T>{label}</T></span></FeatureButton>
                    </li>
                  ))}
                </FeatureGrid>
              </FeatureBox>
            </Workspace>
            <ViewTabs>
              <ViewTab $active><Icon name="features" />功能视图</ViewTab>
              <ViewTab><Icon name="content" />内容视图</ViewTab>
            </ViewTabs>
          </Center>

          <SidePanel $bg="linear-gradient(90deg, #fff 10%, #d4d0c8)">
            <PanelTitle>操作</PanelTitle>
            <ActionList>
              <Action icon="explore">浏览</Action>
              <Action>编辑权限...</Action>
              <ActionRule />
              <Head>编辑站点</Head>
              <Action>绑定...</Action>
              <Action icon="basic">基本设置...</Action>
              <ActionRule />
              <Action>查看应用程序</Action>
              <Action>查看虚拟目录</Action>
              <ActionRule />
              <ActionSection>
                <SectionTitle>管理网站</SectionTitle>
                <button aria-label="折叠">
                  <svg width="16" height="16">
                    <circle cx="8" cy="8" r="7.500" fill="#f3f2f0" stroke="#8c8c8c" />
                    <path d="M4.500 9.500L8 6l3.500 3.500" fill="none" stroke="#222" strokeWidth="1.800" />
                  </svg>
                </button>
              </ActionSection>
              <Action icon="restart">重新启动</Action>
              <Action icon="play" off>启动</Action>
              <Action icon="stopSq">停止</Action>
              <ActionRule />
              <Head>浏览网站</Head>
              <ActionRow $double>
                <Icon name="browse" />
                <ActionLink href="#">
                  <T>浏览 www.chinaskills.com on</T>
                  <br />
                  <T>192.168.73.14:443 (http)</T>
                </ActionLink>
              </ActionRow>
              <ActionRule />
              <Action>高级设置...</Action>
              <ActionRule />
              <Head>配置</Head>
              <Action>限制...</Action>
              <ActionRule />
              <Action icon="help">帮助</Action>
              <Action>联机帮助</Action>
            </ActionList>
          </SidePanel>
        </Main>

        <StatusBar>
          <StatusText>就绪</StatusText>
          <StatusCell $w={25}><Icon name="keyboard" /></StatusCell>
          <StatusCell $w={26}><Icon name="help" /></StatusCell>
          <StatusCell $w={17}>
            <svg width="5" height="2"><path d="M0 1h5" stroke="#000" strokeWidth="2" /></svg>
            <Tri dir="down" />
          </StatusCell>
        </StatusBar>
        <TaskBar>
          <StartButton><Icon name="flag" />开始</StartButton>
          <Grip $after={6} />
          <Quick>
            <ToolButton aria-label="服务器管理器"><Icon name="toolbox" /></ToolButton>
            <ToolButton aria-label="显示桌面"><Icon name="desktop" /></ToolButton>
            <ToolButton aria-label="浏览器"><Icon name="ie" /></ToolButton>
          </Quick>
          <Grip $after={4} />
          <TaskButton $active><Icon name="start" /><span><T>Internet 信息服务(I...</T></span></TaskButton>
          <TaskButton><Icon name="folder" /><T>web</T></TaskButton>
          <Tray>
            <Icon name="usb" />
            <TrayGap />
            <Icon name="network" />
            <Icon name="mute" />
            <Clock><T>0:20</T></Clock>
          </Tray>
        </TaskBar>
      </Frame>

      <Outline role="dialog" aria-label="网站绑定">
        <DialogBody>
          <DialogTitle>
            <TitleText>网站绑定</TitleText>
            <CaptionButton aria-label="帮助">
              <HelpMark>?</HelpMark>
            </CaptionButton>
            <CaptionButton $gap aria-label="关闭">
              <svg width="8" height="8"><path d="M0 0l8 8M8 0L0 8" stroke="#000" strokeWidth="1.500" /></svg>
            </CaptionButton>
          </DialogTitle>
          <DialogContent>
            <ListView>
              <BindTable>
                <thead>
                  <tr>
                    <Th $w={50}>类型</Th>
                    <Th $w={110}>主机名</Th>
                    <Th $w={50}>端口</Th>
                    <Th $w={100}><T>IP 地址</T></Th>
                    <Th>绑定</Th>
                  </tr>
                </thead>
                <tbody>
                  <tr>
                    <Td><T>http</T></Td>
                    <Td><T>www.chinaskil...</T></Td>
                    <Td><T>443</T></Td>
                    <Td><T>192.168.73.14</T></Td>
                    <Td />
                  </tr>
                </tbody>
              </BindTable>
              <ScrollBar thumb={243} />
            </ListView>
            <DialogButtons>
              <DialogButton><T>添加(A)...</T></DialogButton>
              <DialogButton disabled><T>编辑(E)...</T></DialogButton>
              <DialogButton disabled><T>删除(R)</T></DialogButton>
              <DialogButton disabled><T>浏览(B)</T></DialogButton>
              <DialogButton $apart><T>关闭(C)</T></DialogButton>
            </DialogButtons>
          </DialogContent>
        </DialogBody>
      </Outline>

      <Overlay $right={185} $y={179} width="140" height="153" viewBox="0 0 140 153" aria-hidden="true">
        <path d="M139 1L122 8l3 3L63 81 1 151l2 1L66 87 131 17l3 3z" fill="#fb3b37" />
      </Overlay>
      <Overlay $x={3} $y={323} width="13" height="21" viewBox="0 0 13 21" aria-hidden="true">
        <path d="M.5.500v16l3.500-3.500 3 7 3-1.500-3-6.500h5z" fill="#fff" stroke="#000" />
      </Overlay>
    </Desktop>
  );
}
